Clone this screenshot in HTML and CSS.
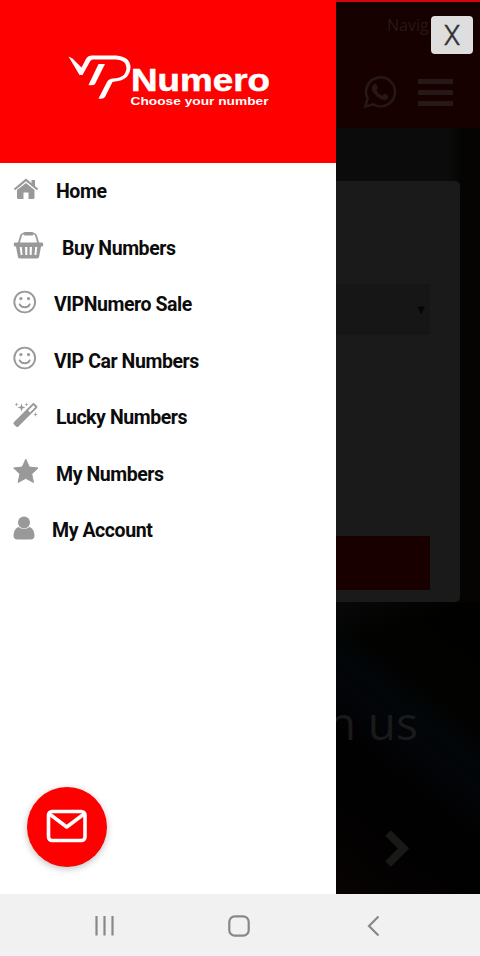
FILE: index.html
```html
<!DOCTYPE html>
<html lang="en">
<head>
<meta charset="utf-8">
<title>VIPNumero</title>
<link rel="stylesheet" href="styles.css">
</head>
<body>
<div class="stage">
  <aside class="drawer">
    <header class="brand">
      <svg width="240" height="80" viewBox="50 40 240 80">
        <path d="M68.500 56.500L72.500 58.500L81.500 67.500L86.500 58Q88 55.500 91.500 55.500H116Q130.500 56.500 130.500 67.500Q129.500 80.500 115 81.500L112.500 82L105 97Q103.500 99.500 98.500 98.500L107 82Q109 78.500 113 78.500Q126 78 126.500 68Q126.500 60 116 59.500H93Q91 59.500 90 61.500L82.500 75H79.500Z" fill="#fff"/>
        <path d="M98.500 64H105L95 84Q93.500 86 88.500 85Z" fill="#fff"/>
        <text class="brand-name" x="131" y="90.500" textLength="139" lengthAdjust="spacingAndGlyphs">Numero</text>
        <text class="brand-tag" x="130.500" y="105" textLength="138" lengthAdjust="spacingAndGlyphs">Choose your number</text>
      </svg>
    </header>
    <nav class="menu">
      <a class="item"><svg width="26" height="24" viewBox="0 0 26 24"><path d="M13 6L21.500 13V20.500Q21.500 22 20 22H15.500V15.500H10.500V22H5.500Q4 22 4 20.500V13Z"/><path d="M1.500 12.500L13 3L24.500 12.500" fill="none" stroke="#999" stroke-width="2.200"/><path d="M18.500 3H22V10L18.500 7Z"/></svg><span>Home</span></a>
      <a class="item"><svg width="31" height="28" viewBox="0 0 31 28"><path d="M5.500 13L8 4.500Q8.500 3 10.500 2.500H20.500Q22.500 3 23 4.500L25.500 13" fill="none" stroke="#999" stroke-width="1.800"/><rect x="11" y="1" width="9" height="3.500" rx="1"/><path fill-rule="evenodd" d="M1.500 11.500H29.500Q31 13.500 29.500 15.500H28L26.200 25.500Q26 27.500 24 27.500H7Q5 27.500 4.800 25.500L3 15.500H1.500Q0 13.500 1.500 11.500ZM6.700 16L7.700 24H9.500L8.800 16ZM12 16L12.400 24H14.300V16ZM16.700 16V24H18.600L19 16ZM22.200 16L21.500 24H23.300L24.300 16Z"/></svg><span class="wide">Buy Numbers</span></a>
      <a class="item"><svg width="24" height="24" viewBox="0 0 24 24"><g fill="none" stroke="#999" stroke-width="1.900"><circle cx="11.700" cy="12" r="10.400"/><path d="M6.700 14.300Q8 17.300 11.700 17.300T16.700 14.300" stroke-linecap="round"/></g><circle cx="7.900" cy="8.600" r="1.600"/><circle cx="15.500" cy="8.600" r="1.600"/></svg><span>VIPNumero Sale</span></a>
      <a class="item"><svg width="24" height="24" viewBox="0 0 24 24"><g fill="none" stroke="#999" stroke-width="1.900"><circle cx="11.700" cy="12" r="10.400"/><path d="M6.700 14.300Q8 17.300 11.700 17.300T16.700 14.300" stroke-linecap="round"/></g><circle cx="7.900" cy="8.600" r="1.600"/><circle cx="15.500" cy="8.600" r="1.600"/></svg><span>VIP Car Numbers</span></a>
      <a class="item"><svg width="26" height="26" viewBox="0 0 26 26"><path fill-rule="evenodd" d="M19.500 1.500Q20.500 .7 21.500 1.500L24 4Q24.800 5 24 6L5.200 24.700Q4.200 25.500 3.300 24.700L.8 22.200Q.1 21.200 .8 20.300ZM20.500 3.300L15.200 8.600L17 10.400L22.300 5.100Z"/><path d="M8.500 1.500L9.500 4.500L12.500 5.500L9.500 6.500L8.500 9.500L7.500 6.500L4.500 5.500L7.500 4.500ZM3.500 .5L4 2L5.500 2.500L4 3L3.500 4.500L3 3L1.500 2.500L3 2ZM13.500 .5L14 2L15.500 2.500L14 3L13.500 4.500L13 3L11.500 2.500L13 2ZM22.500 10L23 12L25 12.500L23 13L22.500 15L22 13L20 12.500L22 12Z"/></svg><span>Lucky Numbers</span></a>
      <a class="item"><svg width="26" height="26" viewBox="0 0 26 26"><path d="M12.800 1.200L16.300 9L25 10L18.700 15.900L20.500 24.500L12.800 20.300L5.100 24.500L6.900 15.900L.6 10L9.300 9Z" stroke="#999" stroke-linejoin="round"/></svg><span>My Numbers</span></a>
      <a class="item"><svg width="22" height="26" viewBox="0 0 22 26"><circle cx="11" cy="7.500" r="6"/><path d="M5.500 12Q11 16 16.500 12Q21 13 21.500 20.500Q21.500 24.500 17.500 24.500H4.500Q.5 24.500 .5 20.500Q1 13 5.500 12Z"/></svg><span>My Account</span></a>
    </nav>
    <div class="mail">
      <svg width="42" height="34" viewBox="0 0 42 34" fill="none" stroke="#fff" stroke-width="3.600" stroke-linejoin="round"><rect x="2.500" y="2.500" width="36.500" height="29" rx="3.500"/><path d="M3.500 5L20.700 18L38 5"/></svg>
    </div>
  </aside>
  <main class="page">
    <div class="topbar">
      <div class="note">Navig</div>
      <div class="tools">
        <svg width="34" height="34" viewBox="0 0 34 34"><path d="M2.300 31.700L4.600 23.500A14.500 14.500 0 1 1 10 29.300Z" fill="none" stroke="#271818" stroke-width="2.500"/><path d="M11 9Q12.500 8 13.500 9.500L14.700 12.500Q15 13.500 13.300 15.300Q15.500 19.300 19.300 20.700L21.300 18.700Q22 18.300 25.300 20.500Q26 24 22 25Q18.500 25.500 13.500 21T9 13Q9 10.500 11 9Z" fill="#271818"/></svg>
        <div class="burger"><i></i><i></i><i></i></div>
      </div>
    </div>
    <section class="card">
      <div class="select">▼</div>
      <div class="submit"></div>
    </section>
    <section class="promo">
      <h2>n us</h2>
      <svg width="26" height="40" viewBox="0 0 26 40"><path d="M3 4L18.500 19.500L3 35" fill="none" stroke="#191917" stroke-width="8"/></svg>
    </section>
    <button class="close">X</button>
  </main>
</div>
<footer class="navbar">
  <svg width="22" height="22" viewBox="0 0 22 22"><path d="M2.500 1V20.500M10.500 1V20.500M18.500 1V20.500"/></svg>
  <svg width="22" height="22" viewBox="0 0 22 22"><rect x="1.300" y="1.300" width="19.400" height="19.400" rx="5.500"/></svg>
  <svg width="22" height="22" viewBox="0 0 22 22"><path d="M16.500 1.500L7 11L16.500 20.500"/></svg>
</footer>
</body>
</html>
```
FILE: styles.css
```css
* { box-sizing: border-box; }
body {
  margin: 0;
  width: 480px;
  height: 956px;
  overflow: hidden;
  font-family: Roboto, "Liberation Sans", sans-serif;
}
svg { display: block; flex: none; }
.stage {
  display: grid;
  grid-template-columns: 336px 144px;
  height: 894px;
}
.drawer {
  position: relative;
  background: #fff;
}
.brand {
  height: 162.500px;
  padding: 40px 0 0 50px;
  background: #f00;
}
.brand-name, .brand-tag {
  font-family: "Liberation Sans", sans-serif;
  font-weight: 700;
  fill: #fff;
}
.brand-name { font-size: 31px; stroke: #fff; stroke-width: .5px; }
.brand-tag { font-size: 11.500px; }
.menu { padding-top: 1px; }
.item {
  display: flex;
  align-items: center;
  gap: 17px;
  height: 56.500px;
  padding-left: 13px;
  color: #0c0c0c;
  font-size: 19.500px;
  font-weight: 700;
  letter-spacing: -.43px;
  white-space: nowrap;
}
.item svg { fill: #999; margin-top: -6px; }
.wide { margin-left: 1px; }
.mail {
  position: absolute;
  left: 27px;
  bottom: 27px;
  display: grid;
  place-items: center;
  width: 80px;
  height: 80px;
  padding-bottom: 3px;
  border-radius: 50%;
  background: #f00;
  box-shadow: 0 2px 7px rgba(0, 0, 0, .25);
}
.page {
  position: relative;
  overflow: hidden;
  border-top: 2px solid #d3080c;
  background: linear-gradient(90deg, #0a0b0a 78%, #050403 88%);
}
.topbar {
  height: 126px;
  padding-top: 13px;
  background: #170000;
  color: #271818;
}
.note {
  height: 20px;
  padding-left: 51px;
  font: 16px/20px "Open Sans", sans-serif;
}
.tools {
  display: flex;
  align-items: center;
  gap: 21px;
  padding: 40px 0 0 27px;
}
.burger {
  display: grid;
  gap: 6px;
  width: 35px;
}
.burger i { height: 5px; background: #271818; }
.card {
  display: flex;
  flex-direction: column;
  justify-content: space-between;
  width: 124px;
  height: 421px;
  margin-top: 53px;
  padding: 103px 30px 12px 0;
  border-radius: 0 5px 5px 0;
  background: #1a1a1a;
}
.select {
  height: 51px;
  padding-right: 5px;
  background: #161616;
  color: #050505;
  font: 10px/51px "DejaVu Sans", sans-serif;
  text-align: right;
}
.submit { height: 54px; background: #190000; }
.promo {
  display: flex;
  flex-direction: column;
  align-items: flex-end;
  height: 292px;
  padding-top: 88px;
  background:
    linear-gradient(160deg, #070807 0, rgba(7, 8, 7, 0) 14%),
    linear-gradient(38deg, #070302 0%, #020101 25%, #010101 40%, #030407 50%, #020609 60%, #020201 68%, #010100 100%);
}
.promo h2 {
  margin: 0 62px 0 0;
  color: #1a1a1b;
  font: 400 46px/64px "Open Sans", sans-serif;
  white-space: nowrap;
}
.promo svg { margin: 75px 69px 0 0; }
.close {
  position: absolute;
  top: 14px;
  left: 95px;
  width: 42px;
  height: 38px;
  padding: 1px 0 0;
  border: 0;
  border-radius: 4px;
  background: #dedede;
  color: #333;
  font: 300 27px/38px Roboto, sans-serif;
  -webkit-text-stroke: .5px #333;
}
.navbar {
  display: flex;
  gap: 112px;
  height: 62px;
  padding: 21px 0 0 94px;
  background: #f1f1f1;
}
.navbar svg { fill: none; stroke: #888; stroke-width: 2.200; }
```
